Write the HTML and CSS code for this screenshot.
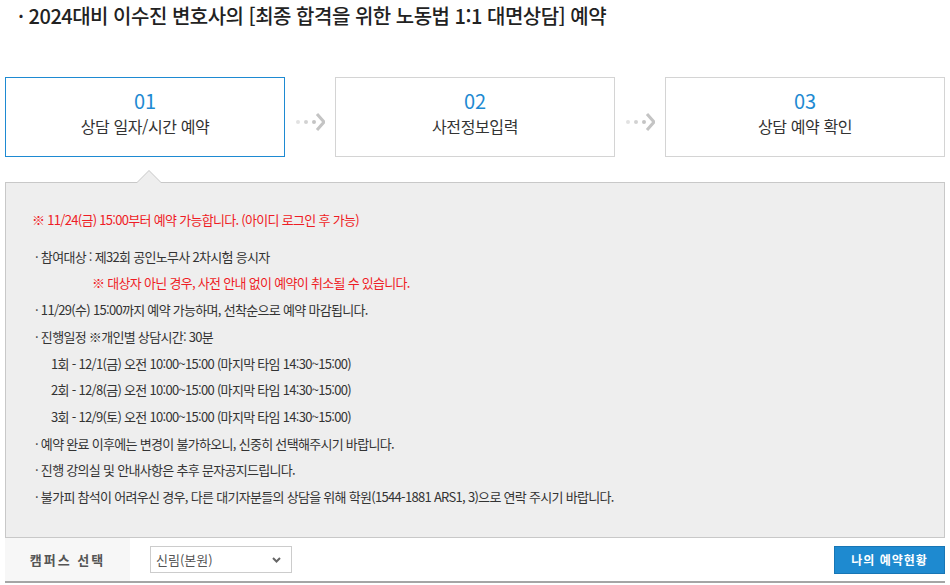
FILE: index.html
```html
<!DOCTYPE html>
<html lang="ko">
<head>
<meta charset="utf-8">
<link rel="stylesheet" href="styles.css">
</head>
<body>
<div class="wrap">
  <h2 class="title">· 2024대비 이수진 변호사의 [최종 합격을 위한 노동법 1:1 대면상담] 예약</h2>

  <div class="steps">
    <div class="step active">
      <span class="num">01</span>
      <span class="label">상담 일자/시간 예약</span>
    </div>
    <div class="arrow">
      <svg width="30" height="20" viewBox="0 0 30 20">
        <circle cx="3" cy="10" r="2" fill="#e2e2e2"/>
        <circle cx="11" cy="10" r="2" fill="#d2d2d2"/>
        <circle cx="19" cy="10" r="2" fill="#c4c4c4"/>
        <path d="M22 2 L29 10 L22 18" fill="none" stroke="#c4c4c4" stroke-width="3"/>
      </svg>
    </div>
    <div class="step">
      <span class="num">02</span>
      <span class="label">사전정보입력</span>
    </div>
    <div class="arrow">
      <svg width="30" height="20" viewBox="0 0 30 20">
        <circle cx="3" cy="10" r="2" fill="#e2e2e2"/>
        <circle cx="11" cy="10" r="2" fill="#d2d2d2"/>
        <circle cx="19" cy="10" r="2" fill="#c4c4c4"/>
        <path d="M22 2 L29 10 L22 18" fill="none" stroke="#c4c4c4" stroke-width="3"/>
      </svg>
    </div>
    <div class="step">
      <span class="num">03</span>
      <span class="label">상담 예약 확인</span>
    </div>
  </div>

  <div class="info">
    <span class="notch"></span>
    <p class="notice">※ 11/24(금) 15:00부터 예약 가능합니다. (아이디 로그인 후 가능)</p>
    <ul class="list">
      <li>· 참여대상 : 제32회 공인노무사 2차시험 응시자</li>
      <li class="warn">※ 대상자 아닌 경우, 사전 안내 없이 예약이 취소될 수 있습니다.</li>
      <li>· 11/29(수) 15:00까지 예약 가능하며, 선착순으로 예약 마감됩니다.</li>
      <li>· 진행일정 ※개인별 상담시간: 30분</li>
      <li class="sub">1회 - 12/1(금) 오전 10:00~15:00 (마지막 타임 14:30~15:00)</li>
      <li class="sub">2회 - 12/8(금) 오전 10:00~15:00 (마지막 타임 14:30~15:00)</li>
      <li class="sub">3회 - 12/9(토) 오전 10:00~15:00 (마지막 타임 14:30~15:00)</li>
      <li>· 예약 완료 이후에는 변경이 불가하오니, 신중히 선택해주시기 바랍니다.</li>
      <li>· 진행 강의실 및 안내사항은 추후 문자공지드립니다.</li>
      <li>· 불가피 참석이 어려우신 경우, 다른 대기자분들의 상담을 위해 학원(1544-1881 ARS1, 3)으로 연락 주시기 바랍니다.</li>
    </ul>
  </div>

  <div class="campus">
    <div class="campus-label">캠퍼스 선택</div>
    <div class="campus-field">
      <div class="select">
        <span>신림(본원)</span>
        <svg width="9" height="6" viewBox="0 0 9 6"><path d="M1 1 L4.5 4.5 L8 1" fill="none" stroke="#666" stroke-width="2"/></svg>
      </div>
    </div>
    <button class="btn">나의 예약현황</button>
  </div>
</div>
</body>
</html>
```
FILE: styles.css
```css
html, body {
  margin: 0;
  padding: 0;
  background: #fff;
}
body {
  font-family: "Noto Sans CJK KR", "Noto Sans", sans-serif;
  color: #333;
}
.wrap {
  width: 940px;
  margin-left: 5px;
}
.title {
  margin: 0;
  padding: 3px 0 0 13px;
  height: 77px;
  box-sizing: border-box;
  font-size: 20px;
  font-weight: 500;
  line-height: 26px;
  letter-spacing: -0.5px;
  color: #222;
}
.steps {
  display: flex;
  align-items: center;
}
.step {
  width: 280px;
  height: 80px;
  box-sizing: border-box;
  border: 1px solid #d4d4d4;
  display: flex;
  flex-direction: column;
  align-items: center;
  justify-content: center;
  padding-bottom: 6px;
}
.step.active {
  border-color: #1e8ad2;
}
.num {
  font-size: 20px;
  line-height: 24px;
  color: #1e8ad2;
  font-weight: 400;
}
.label {
  font-size: 16px;
  line-height: 26px;
  color: #333;
  letter-spacing: -0.4px;
}
.arrow {
  width: 50px;
  display: flex;
  justify-content: center;
  padding-top: 10px;
}
.info {
  position: relative;
  margin-top: 25px;
  background: #eeeeee;
  border: 1px solid #c8c8c8;
  height: 356px;
  box-sizing: border-box;
  padding: 24px 0 0 26px;
  font-size: 13px;
  letter-spacing: -0.7px;
}
.notch {
  position: absolute;
  left: 130px;
  top: -13px;
  width: 0;
  height: 0;
  border-left: 13px solid transparent;
  border-right: 13px solid transparent;
  border-bottom: 13px solid #c8c8c8;
}
.notch::after {
  content: "";
  position: absolute;
  left: -12px;
  top: 1px;
  border-left: 12px solid transparent;
  border-right: 12px solid transparent;
  border-bottom: 12px solid #eeeeee;
}
.notice {
  margin: 0 0 10px 0;
  line-height: 26.7px;
  color: #ee1c25;
}
.list {
  list-style: none;
  margin: 0;
  padding: 0 0 0 3px;
}
.list li {
  line-height: 26.7px;
}
.list li.warn {
  color: #ee1c25;
  padding-left: 57px;
}
.list li.sub {
  padding-left: 16px;
}
.campus {
  display: flex;
  align-items: center;
  height: 45px;
  border-bottom: 2px solid #a5a5a5;
  box-sizing: border-box;
}
.campus-label {
  width: 125px;
  height: 100%;
  background: #f7f7f7;
  display: flex;
  align-items: center;
  justify-content: center;
  font-size: 13px;
  font-weight: 700;
  color: #555;
  letter-spacing: 2px;
}
.campus-field {
  flex: 1;
  padding-left: 20px;
}
.select {
  width: 142px;
  height: 27px;
  box-sizing: border-box;
  border: 1px solid #cccccc;
  background: #fff;
  display: flex;
  align-items: center;
  justify-content: space-between;
  padding: 0 10px 0 5px;
  font-size: 13px;
  color: #555;
}
.btn {
  width: 111px;
  height: 28px;
  background: #1e8ad0;
  border: 1px solid #1776b5;
  color: #fff;
  font-family: inherit;
  font-size: 12px;
  font-weight: 700;
  letter-spacing: 1px;
  padding: 0;
  margin-right: 0;
}
```
